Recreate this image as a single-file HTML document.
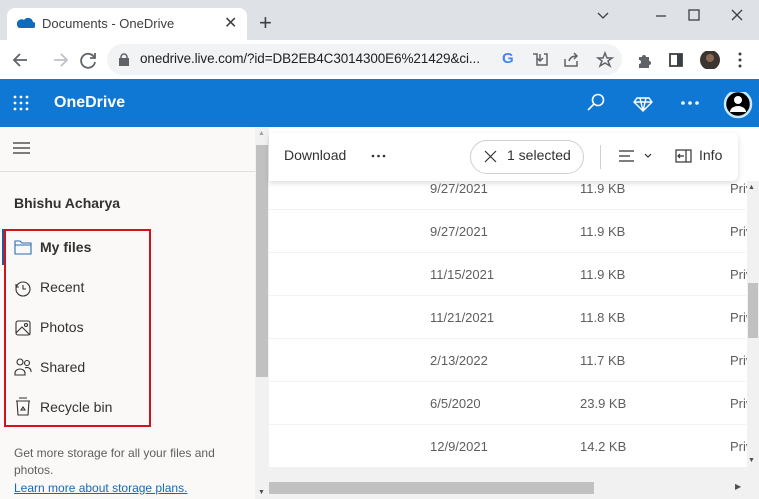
<!DOCTYPE html>
<html><head><style>
*{margin:0;padding:0;box-sizing:border-box}
body{width:759px;height:499px;overflow:hidden;position:relative;font-family:"Segoe UI","Liberation Sans",sans-serif;background:#fff;color:#323130}
.a{position:absolute}
.t{font-size:14px;white-space:nowrap}
.g{color:#605e5c;font-size:13px}
</style></head><body>
<div class="a" style="left:0;top:0;width:759px;height:40px;background:#dee1e6"></div>
<div class="a" style="left:7px;top:8px;width:240px;height:34px;background:#fff;border-radius:8px 8px 0 0"></div>
<svg class="a" style="left:17px;top:17px" width="18" height="12"><path d="M2 11h14a3 3 0 0 0 0-6 5 5 0 0 0-9-2 4 4 0 0 0-5 8z" fill="#0f6cbd"/></svg>
<div class="a t" style="left:42px;top:16px;font-size:13px;color:#3c4043">Documents - OneDrive</div>
<div class="a" style="left:224px;top:13px;font-size:16px;color:#3c4043">✕</div>
<div class="a" style="left:259px;top:10px;font-size:22px;color:#3c4043">+</div>
<svg class="a" style="left:596px;top:8px" width="150" height="16" stroke="#3c4043" fill="none" stroke-width="1.3"><path d="M2 5l5 5 5-5"/><path d="M60 8h10"/><rect x="93" y="2" width="10" height="10"/><path d="M136 2l10 10M146 2l-10 10"/></svg>
<div class="a" style="left:0;top:40px;width:759px;height:39px;background:#fff"></div>
<svg class="a" style="left:10px;top:50px" width="90" height="20" stroke="#5f6368" fill="none" stroke-width="1.8"><path d="M17 10H4M10 4l-6 6 6 6"/><path d="M44 10h13M51 4l6 6-6 6" stroke="#bdc1c6"/><path d="M84 7a7 7 0 1 0 1 5"/><path d="M85 3v5h-5"/></svg>
<div class="a" style="left:107px;top:44px;width:515px;height:31px;background:#f1f3f4;border-radius:16px"></div>
<svg class="a" style="left:118px;top:53px" width="12" height="13"><rect x="1" y="5" width="10" height="8" fill="#5f6368"/><path d="M3 6V4a3 3 0 0 1 6 0v2" stroke="#5f6368" fill="none" stroke-width="1.5"/></svg>
<div class="a t" style="left:140px;top:51px;font-size:13.5px;color:#202124;letter-spacing:-0.1px">onedrive.live.com/?id=DB2EB4C3014300E6%21429&amp;ci...</div>
<div class="a" style="left:502px;top:50px;font-weight:bold;font-size:15px;color:#4285f4">G</div>
<svg class="a" style="left:531px;top:51px" width="90" height="18" stroke="#5f6368" fill="none" stroke-width="1.5"><path d="M2 3h4v11h10V3h-3M9 3v7M6 7l3 3 3-3"/><path d="M34 8v7h12v-5M38 10c1-4 4-5 8-5M43 2l3 3-3 3"/><path d="M74 2l2 5h5l-4 3 2 5-5-3-5 3 2-5-4-3h5z"/></svg>
<svg class="a" style="left:636px;top:51px" width="110" height="18"><path d="M3 6h3a2 2 0 0 1 4 0h3v4a2 2 0 0 1 0 4v3H3v-4a2 2 0 0 0 0-4z" fill="#5f6368"/><rect x="34" y="3" width="12" height="12" stroke="#3c4043" fill="none" stroke-width="1.8"/><rect x="41" y="3" width="5" height="12" fill="#3c4043"/><circle cx="74" cy="9" r="10" fill="#3a3530"/><circle cx="74" cy="7" r="4" fill="#8a6a55"/><circle cx="104" cy="3" r="1.5" fill="#3c4043"/><circle cx="104" cy="9" r="1.5" fill="#3c4043"/><circle cx="104" cy="15" r="1.5" fill="#3c4043"/></svg>
<div class="a" style="left:0;top:79px;width:759px;height:48px;background:#0f78d4"></div>
<svg class="a" style="left:13px;top:95px" width="18" height="18" fill="#fff"><circle cx="2" cy="2" r="1.4"/><circle cx="8" cy="2" r="1.4"/><circle cx="14" cy="2" r="1.4"/><circle cx="2" cy="8" r="1.4"/><circle cx="8" cy="8" r="1.4"/><circle cx="14" cy="8" r="1.4"/><circle cx="2" cy="14" r="1.4"/><circle cx="8" cy="14" r="1.4"/><circle cx="14" cy="14" r="1.4"/></svg>
<div class="a" style="left:54px;top:94px;font-size:16px;font-weight:bold;color:#fff">OneDrive</div>
<svg class="a" style="left:585px;top:92px" width="170" height="30" fill="none" stroke="#fff" stroke-width="1.6"><circle cx="13" cy="8" r="5.5"/><path d="M9 12l-6 6"/><path d="M52 6h12l3 4-9 9-9-9z M49 10h18M55 6l3 13 3-13" stroke-width="1.4"/><circle cx="98" cy="11" r="1" fill="#fff"/><circle cx="105" cy="11" r="1" fill="#fff"/><circle cx="112" cy="11" r="1" fill="#fff"/><circle cx="153" cy="12" r="13" fill="#000" stroke="#cce8ff" stroke-width="2.5"/><circle cx="153" cy="8" r="4" fill="#fff" stroke="none"/><path d="M145 20a8 6 0 0 1 16 0z" fill="#fff" stroke="none"/></svg>
<div class="a" style="left:0;top:127px;width:255px;height:372px;background:#faf9f8"></div>
<svg class="a" style="left:13px;top:142px" width="18" height="13" stroke="#323130" stroke-width="1.2"><path d="M0 1h17M0 6h17M0 11h17"/></svg>
<div class="a" style="left:0;top:171px;width:255px;height:1px;background:#e1dfdd"></div>
<div class="a t" style="left:14px;top:195px;font-weight:bold;font-size:14px">Bhishu Acharya</div>
<div class="a" style="left:2px;top:229px;width:3px;height:36px;background:#2b579a"></div>
<div class="a" style="left:4px;top:229px;width:147px;height:198px;border:2.5px solid #d3121e"></div>
<svg class="a" style="left:14px;top:238px" width="18" height="180" fill="none" stroke="#323130" stroke-width="1.1"><path d="M1 3h5l2 2h9v11H1z M1 7h16" stroke="#2b6cb0"/><circle cx="9" cy="51" r="7"/><path d="M9 47v4h3M2 46v3h3"/><rect x="2" y="83" width="14" height="14" rx="2"/><path d="M2 95l6-6 8 8"/><circle cx="12" cy="87" r="1.5"/><circle cx="6" cy="124" r="3"/><circle cx="13" cy="125" r="2.5"/><path d="M1 135a5 4 0 0 1 10 0v2H1zM11 130a4 4 0 0 1 6 4"/><path d="M2 163h14M3 163l1 14h10l1-14M5 160h8"/><path d="M7 172l2-3 2 3z"/></svg>
<div class="a t" style="left:40px;top:239px;font-weight:bold">My files</div>
<div class="a t" style="left:40px;top:279px">Recent</div>
<div class="a t" style="left:40px;top:319px">Photos</div>
<div class="a t" style="left:40px;top:359px">Shared</div>
<div class="a t" style="left:40px;top:399px">Recycle bin</div>
<div class="a" style="left:14px;top:445px;font-size:12px;color:#605e5c;line-height:16.5px;width:230px">Get more storage for all your files and photos.</div>
<div class="a" style="left:14px;top:481px;font-size:12px;color:#0f6cbd;text-decoration:underline;white-space:nowrap">Learn more about storage plans.</div>
<div class="a" style="left:255px;top:127px;width:14px;height:372px;background:#f1f1f1"></div>
<div class="a" style="left:256px;top:145px;width:12px;height:232px;background:#c1c1c1"></div>
<div class="a" style="left:258px;top:130px;font-size:7px;color:#a3a3a3">▲</div>
<div class="a" style="left:258px;top:489px;font-size:7px;color:#505050">▼</div>
<div class="a" style="left:269px;top:127px;width:490px;height:372px;background:#fff"></div>
<div class="a" style="left:269px;top:133px;width:469px;height:48px;background:#fff;box-shadow:0 2px 6px rgba(0,0,0,.15);border-radius:0 6px 6px 0"></div>
<div class="a t" style="left:284px;top:147px">Download</div>
<svg class="a" style="left:371px;top:154px" width="16" height="4" fill="#323130"><circle cx="2" cy="2" r="1.3"/><circle cx="7.5" cy="2" r="1.3"/><circle cx="13" cy="2" r="1.3"/></svg>
<div class="a" style="left:470px;top:140px;width:114px;height:34px;border:1px solid #d2d0ce;border-radius:17px"></div>
<svg class="a" style="left:484px;top:150px" width="13" height="13" stroke="#323130" stroke-width="1.2"><path d="M1 1l11 11M12 1L1 12"/></svg>
<div class="a t" style="left:507px;top:147px">1 selected</div>
<div class="a" style="left:600px;top:145px;width:1px;height:24px;background:#d2d0ce"></div>
<svg class="a" style="left:618px;top:149px" width="40" height="14" stroke="#323130" stroke-width="1.2" fill="none"><path d="M1 2h15M1 7h11M1 12h15M27 5l3 3 3-3"/></svg>
<svg class="a" style="left:675px;top:149px" width="18" height="14" stroke="#323130" stroke-width="1.2" fill="none"><rect x="1" y="1" width="15" height="12"/><path d="M11 1v12M3 7h6M5 5l-2 2 2 2"/></svg>
<div class="a t" style="left:699px;top:147px">Info</div>
<div class="a" style="left:269px;top:209px;width:477px;height:1px;background:#f3f2f1"></div>
<div class="a" style="left:269px;top:252px;width:477px;height:1px;background:#f3f2f1"></div>
<div class="a" style="left:269px;top:295px;width:477px;height:1px;background:#f3f2f1"></div>
<div class="a" style="left:269px;top:338px;width:477px;height:1px;background:#f3f2f1"></div>
<div class="a" style="left:269px;top:381px;width:477px;height:1px;background:#f3f2f1"></div>
<div class="a" style="left:269px;top:424px;width:477px;height:1px;background:#f3f2f1"></div>
<div class="a g" style="left:430px;top:181px">9/27/2021</div><div class="a g" style="left:580px;top:181px">11.9 KB</div><div class="a g" style="left:730px;top:181px">Priv</div>
<div class="a g" style="left:430px;top:224px">9/27/2021</div><div class="a g" style="left:580px;top:224px">11.9 KB</div><div class="a g" style="left:730px;top:224px">Priv</div>
<div class="a g" style="left:430px;top:267px">11/15/2021</div><div class="a g" style="left:580px;top:267px">11.9 KB</div><div class="a g" style="left:730px;top:267px">Priv</div>
<div class="a g" style="left:430px;top:310px">11/21/2021</div><div class="a g" style="left:580px;top:310px">11.8 KB</div><div class="a g" style="left:730px;top:310px">Priv</div>
<div class="a g" style="left:430px;top:353px">2/13/2022</div><div class="a g" style="left:580px;top:353px">11.7 KB</div><div class="a g" style="left:730px;top:353px">Priv</div>
<div class="a g" style="left:430px;top:396px">6/5/2020</div><div class="a g" style="left:580px;top:396px">23.9 KB</div><div class="a g" style="left:730px;top:396px">Priv</div>
<div class="a g" style="left:430px;top:439px">12/9/2021</div><div class="a g" style="left:580px;top:439px">14.2 KB</div><div class="a g" style="left:730px;top:439px">Priv</div>
<div class="a" style="left:747px;top:181px;width:12px;height:286px;background:#f1f1f1"></div>
<div class="a" style="left:748px;top:283px;width:10px;height:55px;background:#c1c1c1"></div>
<div class="a" style="left:748px;top:184px;font-size:7px;color:#505050">▲</div>
<div class="a" style="left:748px;top:457px;font-size:7px;color:#505050">▼</div>
<div class="a" style="left:269px;top:467px;width:490px;height:32px;background:#f1f1f1"></div>
<div class="a" style="left:269px;top:482px;width:325px;height:12px;background:#c1c1c1"></div>
<div class="a" style="left:735px;top:482px;font-size:8px;color:#505050">▶</div>
</body></html>
